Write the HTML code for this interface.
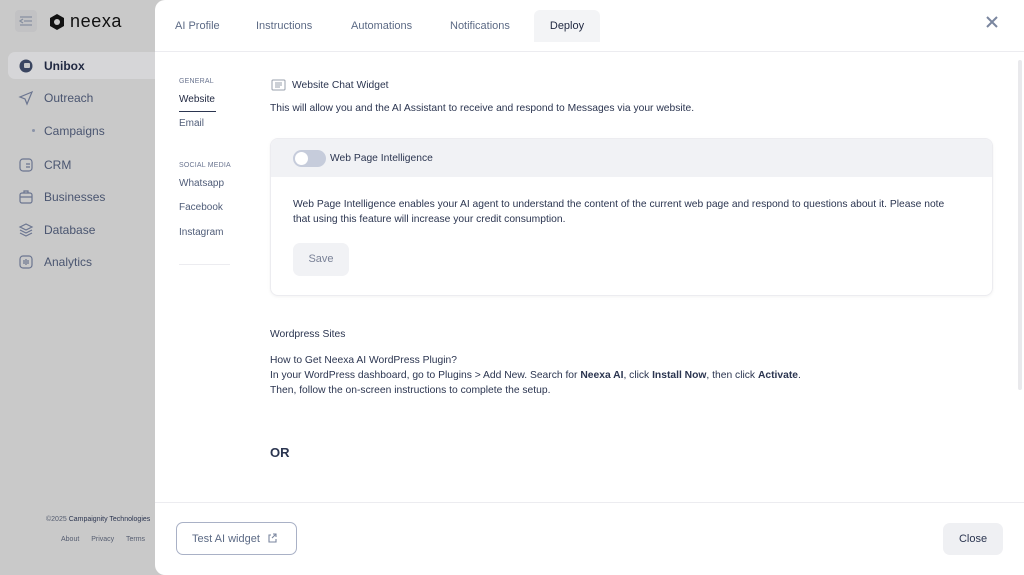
<!DOCTYPE html>
<html><head><meta charset="utf-8"><style>
*{box-sizing:border-box;margin:0;padding:0}
body{width:1024px;height:575px;overflow:hidden;background:#c9c9c9;font-family:"Liberation Sans",sans-serif;position:relative;color:#2b3550}
.side{position:absolute;left:0;top:0;width:160px;height:575px;background:#c9c9c9}
.nav{position:absolute;left:18px;font-size:12px;color:#4a5570;display:flex;align-items:center}
.nav svg{margin-right:10px}
.modal{position:absolute;left:155px;top:0;width:869px;height:575px;background:#fff;border-radius:10px 0 0 10px}
.tabs{position:absolute;left:0;top:0;width:869px;height:52px;border-bottom:1px solid #ececf0}
.tab{position:absolute;top:20px;font-size:11px;color:#5c6a85}
.deploy{position:absolute;left:379px;top:10px;width:66px;height:32px;background:#f3f4f6;border-radius:6px 6px 0 0;font-size:11px;color:#1f2740;text-align:center;line-height:32px;font-weight:500}
.sm{position:absolute;font-size:10px;color:#4f5c78}
.lab{position:absolute;font-size:7px;color:#6b7590;letter-spacing:.2px}
.t{position:absolute;font-size:10.3px;color:#2b3550;white-space:nowrap}
.card{position:absolute;left:270px;top:138px;width:723px;height:158px;border:1px solid #ececf0;border-radius:8px;box-shadow:0 1px 3px rgba(0,0,0,.05);overflow:hidden}
.card .hd{height:38px;background:#f1f2f5}
</style></head><body>
<div class="side">
 <div style="position:absolute;left:15px;top:10px;width:22px;height:22px;background:#c2c2c4;border-radius:4px"></div>
 <svg style="position:absolute;left:19px;top:15px" width="14" height="12" stroke="#8790a0" stroke-width="1.3" fill="none"><path d="M1 2h12M5 6h8M1 10h12M4 4L1 6l3 2"/></svg>
 <svg style="position:absolute;left:49px;top:13px" width="16" height="18"><path d="M8 1l7 4v8l-7 4-7-4V5z" fill="#111"/><circle cx="8" cy="9" r="3" fill="#c9c9c9"/></svg>
 <div style="position:absolute;left:70px;top:11px;font-size:18px;color:#111;letter-spacing:.6px">neexa</div>
 <div style="position:absolute;left:8px;top:52px;width:152px;height:27px;background:#d6d6d8;border-radius:7px 0 0 7px"></div>
 <div class="nav" style="top:58px;font-weight:bold;color:#1f2740"><svg width="16" height="16"><circle cx="8" cy="8" r="6.5" fill="#3a4560"/><rect x="6" y="5" width="6" height="5" rx="1" fill="#c9c9c9"/></svg>Unibox</div>
 <div class="nav" style="top:90px"><svg width="16" height="16" fill="none" stroke="#6b7590" stroke-width="1.2"><path d="M14 2L2 7l5 2 2 5z"/></svg>Outreach</div>
 <div style="position:absolute;left:32px;top:129px;width:3px;height:3px;border-radius:50%;background:#8a93a8"></div>
 <div class="nav" style="top:124px;left:44px;font-weight:500">Campaigns</div>
 <div class="nav" style="top:157px"><svg width="16" height="16" fill="none" stroke="#6b7590" stroke-width="1.2"><rect x="2" y="2" width="12" height="12" rx="3"/><path d="M8 7h4M8 10h4"/></svg>CRM</div>
 <div class="nav" style="top:189px"><svg width="16" height="16" fill="none" stroke="#6b7590" stroke-width="1.2"><rect x="2" y="4" width="12" height="10" rx="2"/><path d="M6 4V2h4v2M2 8h12"/></svg>Businesses</div>
 <div class="nav" style="top:222px"><svg width="16" height="16" fill="none" stroke="#6b7590" stroke-width="1.2"><path d="M8 2l6 3-6 3-6-3zM2 8l6 3 6-3M2 11l6 3 6-3"/></svg>Database</div>
 <div class="nav" style="top:254px"><svg width="16" height="16" fill="none" stroke="#6b7590" stroke-width="1.2"><rect x="2" y="2" width="12" height="12" rx="3"/><path d="M6 6v4M8 5v6M10 6v4"/></svg>Analytics</div>
 <div style="position:absolute;left:46px;top:516px;font-size:7px;color:#555d70;white-space:nowrap">©2025 <span style="color:#2b3550">Campaignity Technologies</span></div>
 <div style="position:absolute;left:61px;top:536px;font-size:7px;color:#555d70;word-spacing:10px">About Privacy Terms</div>
</div>
<div class="modal">
 <div class="tabs">
  <div class="tab" style="left:20px">AI Profile</div>
  <div class="tab" style="left:101px">Instructions</div>
  <div class="tab" style="left:196px">Automations</div>
  <div class="tab" style="left:295px">Notifications</div>
  <div class="deploy">Deploy</div>
  <svg style="position:absolute;left:831px;top:16px" width="12" height="12" stroke="#7a869f" stroke-width="2"><path d="M1 1l10 10M11 1L1 11"/></svg>
 </div>
 <div class="lab" style="left:24px;top:78px">GENERAL</div>
 <div class="sm" style="left:24px;top:94px;color:#1f2740">Website</div>
 <div style="position:absolute;left:24px;top:111px;width:37px;height:1px;background:#2b3550"></div>
 <div class="sm" style="left:24px;top:118px">Email</div>
 <div class="lab" style="left:24px;top:162px">SOCIAL MEDIA</div>
 <div class="sm" style="left:24px;top:178px">Whatsapp</div>
 <div class="sm" style="left:24px;top:202px">Facebook</div>
 <div class="sm" style="left:24px;top:227px">Instagram</div>
 <div style="position:absolute;left:24px;top:264px;width:51px;height:1px;background:#ececf0"></div>
 <div style="position:absolute;left:863px;top:60px;width:4px;height:330px;background:#e9e9ec;border-radius:2px"></div>
 <div style="position:absolute;left:0;top:502px;width:869px;height:1px;background:#ececf0"></div>
 <div style="position:absolute;left:21px;top:522px;width:121px;height:33px;border:1px solid #a9b1c6;border-radius:7px;font-size:11px;color:#5c6a85;line-height:33px;padding-left:15px">Test AI widget <svg width="10" height="10" fill="none" stroke="#7a869f" stroke-width="1.1" style="margin-left:4px;vertical-align:-1px"><path d="M4 2H2v7h7V6M6 1h3v3M9 1L5 5"/></svg></div>
 <div style="position:absolute;left:788px;top:523px;width:60px;height:32px;background:#eff0f3;border-radius:7px;font-size:11px;color:#2b3550;text-align:center;line-height:33px">Close</div>
</div>
<svg style="position:absolute;left:271px;top:79px" width="15" height="13" fill="none" stroke="#9aa0ac" stroke-width="1"><rect x="1" y="1" width="13" height="10" rx="1"/><path d="M4 4h7M4 6h7M4 8h5"/></svg>
<div class="t" style="left:292px;top:80px">Website Chat Widget</div>
<div class="t" style="left:270px;top:103px">This will allow you and the AI Assistant to receive and respond to Messages via your website.</div>
<div class="card"><div class="hd"></div>
 <div style="position:absolute;left:22px;top:11px;width:33px;height:17px;background:#c6ccdb;border-radius:9px"><div style="position:absolute;left:2px;top:2px;width:13px;height:13px;border-radius:50%;background:#fff"></div></div>
 <div class="t" style="left:59px;top:14px">Web Page Intelligence</div>
 <div class="t" style="left:22px;top:58px;line-height:15px">Web Page Intelligence enables your AI agent to understand the content of the current web page and respond to questions about it. Please note<br>that using this feature will increase your credit consumption.</div>
 <div style="position:absolute;left:22px;top:104px;width:56px;height:33px;background:#f1f2f5;border-radius:7px;font-size:11px;color:#7a8297;text-align:center;line-height:33px">Save</div>
</div>
<div class="t" style="left:270px;top:329px">Wordpress Sites</div>
<div class="t" style="left:270px;top:353px;line-height:15px">How to Get Neexa AI WordPress Plugin?<br>In your WordPress dashboard, go to Plugins &gt; Add New. Search for <b>Neexa AI</b>, click <b>Install Now</b>, then click <b>Activate</b>.<br>Then, follow the on-screen instructions to complete the setup.</div>
<div class="t" style="left:270px;top:445px;font-size:13px;font-weight:bold">OR</div>
</body></html>
